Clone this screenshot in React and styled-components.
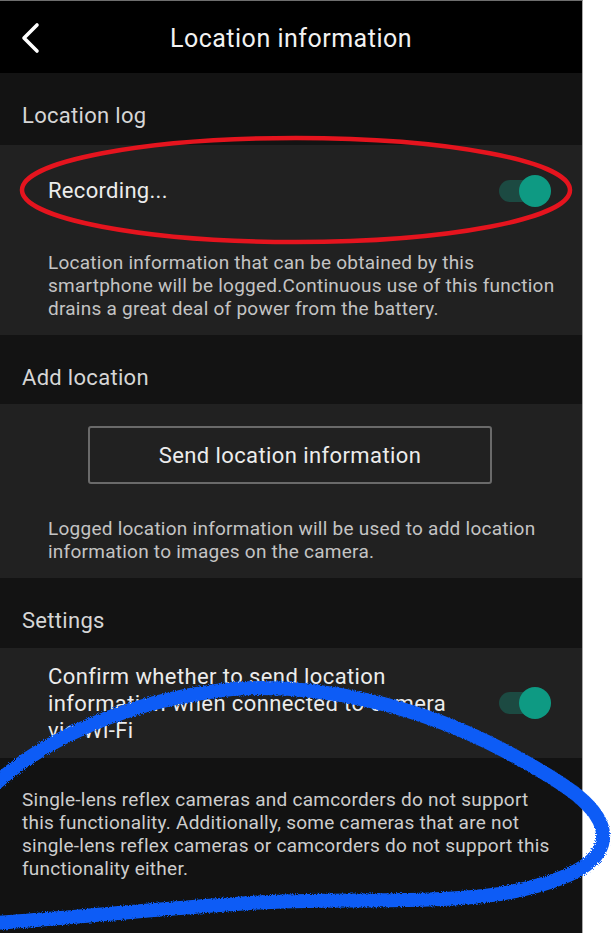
import styled, { createGlobalStyle } from "styled-components";

const GlobalStyle = createGlobalStyle`
  html, body {
    margin: 0;
    padding: 0;
    background: #ffffff;
  }
  body {
    font-family: Roboto, "Noto Sans", sans-serif;
  }
`;

const Page = styled.div`
  position: relative;
  width: 613px;
  height: 933px;
  overflow: hidden;
  background: #ffffff;
`;

const Screen = styled.div`
  width: 583px;
  height: 933px;
  background: #121212;
  border-top: 1px solid #6e6e6e;
  border-right: 1px solid #a8a8a8;
  box-sizing: border-box;
  display: flex;
  flex-direction: column;
`;

const Header = styled.header`
  height: 72px;
  background: #000;
  display: grid;
  grid-template-columns: 72px 1fr 72px;
  align-items: center;
  padding-top: 2px;
  box-sizing: border-box;
`;

const BackButton = styled.button`
  background: none;
  border: 0;
  padding: 0 0 0 20px;
  display: flex;
  align-items: center;
  cursor: pointer;
`;

const Title = styled.h1`
  margin: 0;
  font-size: 25px;
  font-weight: 400;
  color: #f2f2f2;
  text-align: center;
  letter-spacing: 0.5px;
`;

const SectionHeader = styled.div`
  height: ${(p) => p.$height || 70}px;
  box-sizing: border-box;
  padding: 30px 22px 0;
  font-size: 22px;
  line-height: 25px;
  letter-spacing: 0.3px;
  color: #d6d6d6;
  background: #131313;
`;

const Card = styled.div`
  background: #212121;
  display: flex;
  flex-direction: column;
`;

const SwitchRow = styled.div`
  height: ${(p) => p.$height}px;
  box-sizing: border-box;
  padding: 0 31px 0 48px;
  display: flex;
  align-items: center;
  justify-content: space-between;
`;

const RowLabel = styled.div`
  font-size: 22px;
  line-height: ${(p) => p.$lh || 26}px;
  letter-spacing: ${(p) => p.$ls || 0.3}px;
  color: #ececec;
  max-width: ${(p) => p.$max || 420}px;
`;

const Track = styled.div`
  position: relative;
  width: 52px;
  height: 32px;
  display: flex;
  align-items: center;
`;

const TrackBar = styled.div`
  width: 44px;
  height: 22px;
  border-radius: 11px;
  background: #1c4a42;
`;

const Thumb = styled.div`
  position: absolute;
  right: 0;
  top: 0;
  width: 32px;
  height: 32px;
  border-radius: 50%;
  background: #0e9a83;
`;

const Description = styled.p`
  margin: 0;
  padding: ${(p) => p.$pad};
  font-size: 19px;
  line-height: 23px;
  letter-spacing: 0.25px;
  color: #c4c4c4;
`;

const ButtonWrap = styled.div`
  padding: 22px 0 0 88px;
`;

const OutlineButton = styled.button`
  width: 404px;
  height: 58px;
  background: transparent;
  border: 2px solid #6a6a6a;
  border-radius: 3px;
  font-family: inherit;
  font-size: 22px;
  letter-spacing: 0.4px;
  color: #ececec;
  cursor: pointer;
`;

const Note = styled.p`
  margin: 0;
  padding: 30px 26px 0 22px;
  font-size: 19px;
  line-height: 23px;
  letter-spacing: 0.25px;
  color: #cdcdcd;
  background: #121212;
  flex: 1;
`;

const Marks = styled.svg`
  position: absolute;
  left: 0;
  top: 0;
  pointer-events: none;
`;

function Toggle() {
  return (
    <Track>
      <TrackBar />
      <Thumb />
    </Track>
  );
}

export default function App() {
  return (
    <>
      <GlobalStyle />
      <Page>
        <Screen>
          <Header>
            <BackButton aria-label="Back">
              <svg width="22" height="32" viewBox="0 0 22 32">
                <path
                  d="M17 3 L4 16 L17 29"
                  fill="none"
                  stroke="#fff"
                  strokeWidth="3.6"
                  strokeLinecap="round"
                  strokeLinejoin="round"
                />
              </svg>
            </BackButton>
            <Title>Location information</Title>
            <span />
          </Header>

          <SectionHeader $height={72}>Location log</SectionHeader>
          <Card>
            <SwitchRow $height={92}>
              <RowLabel>Recording...</RowLabel>
              <Toggle />
            </SwitchRow>
            <Description $pad="14px 20px 15px 48px">
              Location information that can be obtained by this smartphone will be
              logged.Continuous use of this function drains a great deal of power
              from the battery.
            </Description>
          </Card>

          <SectionHeader $height={69}>Add location</SectionHeader>
          <Card>
            <ButtonWrap>
              <OutlineButton>Send location information</OutlineButton>
            </ButtonWrap>
            <Description $pad="33px 20px 15px 48px">
              Logged location information will be used to add location information
              to images on the camera.
            </Description>
          </Card>

          <SectionHeader>Settings</SectionHeader>
          <Card>
            <SwitchRow $height={110}>
              <RowLabel $lh={27} $ls={0.4} $max={420}>
                Confirm whether to send location information when connected to
                camera via Wi-Fi
              </RowLabel>
              <Toggle />
            </SwitchRow>
          </Card>

          <Note>
            Single-lens reflex cameras and camcorders do not support this
            functionality. Additionally, some cameras that are not single-lens
            reflex cameras or camcorders do not support this functionality either.
          </Note>
        </Screen>

        <Marks width="613" height="933" viewBox="0 0 613 933">
          <defs>
            <filter id="crayon" x="-5%" y="-5%" width="110%" height="110%">
              <feTurbulence type="fractalNoise" baseFrequency="0.9" numOctaves="2" seed="3" />
              <feDisplacementMap in="SourceGraphic" scale="4" />
            </filter>
          </defs>
          <ellipse
            cx="296"
            cy="190"
            rx="274"
            ry="52"
            fill="none"
            stroke="#e5141e"
            strokeWidth="4.5"
          />
          <path
            d="M -6 785
               C 40 743, 120 701, 232 689
               C 322 683, 420 706, 505 751
               C 565 783, 606 809, 603 839
               C 600 867, 560 883, 500 894
               C 420 905, 330 897, 250 903
               C 150 909, 60 919, -6 923"
            fill="none"
            stroke="#0b5cf6"
            strokeWidth="14"
            strokeLinecap="round"
            filter="url(#crayon)"
          />
        </Marks>
      </Page>
    </>
  );
}
